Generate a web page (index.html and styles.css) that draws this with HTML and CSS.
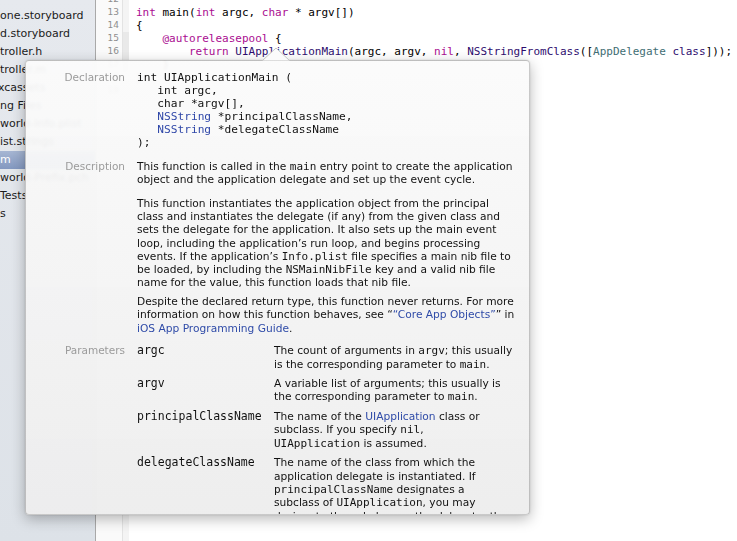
FILE: index.html
```html
<!DOCTYPE html>
<html>
<head>
<meta charset="utf-8">
<link rel="stylesheet" href="styles.css">
</head>
<body>
<div class="window">
  <nav class="sidebar">
    <ul class="files">
      <li>ate.m</li>
      <li>one.storyboard</li>
      <li>d.storyboard</li>
      <li>troller.h</li>
      <li>troller.m</li>
      <li class="cut">xcassets</li>
      <li>ng Files</li>
      <li>world-Info.plist</li>
      <li>ist.strings</li>
      <li class="selected">m</li>
      <li>world-Prefix.pch</li>
      <li>Tests</li>
      <li>s</li>
    </ul>
  </nav>
  <div class="gutter">
    <div class="numbers">
      <div>12</div><div>13</div><div>14</div><div>15</div><div>16</div><div>17</div><div>18</div><div>19</div>
    </div>
  </div>
  <div class="ribbon">
    <div class="fold"></div>
  </div>
  <main class="editor">
<pre class="code"><span> </span>
<span class="kw">int</span> main(<span class="kw">int</span> argc, <span class="kw">char</span> * argv[])
{
    <span class="kw">@autoreleasepool</span> {
        <span class="kw">return</span> <span class="fn">UIApplicationMain</span>(argc, argv, <span class="kw">nil</span>, <span class="fn">NSStringFromClass</span>([<span class="cls">AppDelegate</span> <span class="fn">class</span>]));
    }
}
</pre>
  </main>
</div>

<div class="popover">
  <svg class="arrow" width="28" height="14" viewBox="0 0 28 14"><path d="M0.5 13.5 L14 1 L27.5 13.5" fill="#fbfbfb" stroke="#c4c4c4" stroke-width="1"/></svg>
  <div class="popover-body">
    <section class="qh-section">
      <div class="qh-label">Declaration</div>
<pre class="decl">int UIApplicationMain (
   int argc,
   char *argv[],
   <span class="type">NSString</span> *principalClassName,
   <span class="type">NSString</span> *delegateClassName
);</pre>
    </section>

    <section class="qh-section desc-section">
      <div class="qh-label">Description</div>
      <div class="desc">
        <p>This function is called in the <code>main</code> entry point to create the application<br>object and the application delegate and set up the event cycle.</p>
        <p class="p2">This function instantiates the application object from the principal<br>class and instantiates the delegate (if any) from the given class and<br>sets the delegate for the application. It also sets up the main event<br>loop, including the application’s run loop, and begins processing<br>events. If the application’s <code>Info.plist</code> file specifies a main nib file to<br>be loaded, by including the <code>NSMainNibFile</code> key and a valid nib file<br>name for the value, this function loads that nib file.</p>
        <p class="p3">Despite the declared return type, this function never returns. For more<br>information on how this function behaves, see “<a>“Core App Objects”</a>” in<br><a>iOS App Programming Guide</a>.</p>
      </div>
    </section>

    <section class="qh-section params-section">
      <div class="qh-label">Parameters</div>
      <dl class="params">
        <dt>argc</dt>
        <dd>The count of arguments in <code>argv</code>; this usually<br>is the corresponding parameter to <code>main</code>.</dd>
        <dt>argv</dt>
        <dd>A variable list of arguments; this usually is<br>the corresponding parameter to <code>main</code>.</dd>
        <dt>principalClassName</dt>
        <dd>The name of the <a>UIApplication</a> class or<br>subclass. If you specify <code>nil</code>,<br><code>UIApplication</code> is assumed.</dd>
        <dt>delegateClassName</dt>
        <dd>The name of the class from which the<br>application delegate is instantiated. If<br><code>principalClassName</code> designates a<br>subclass of <code>UIApplication</code>, you may<br>designate the subclass as the delegate; the</dd>
      </dl>
    </section>
  </div>
</div>
</body>
</html>
```

FILE: styles.css
```css
* { box-sizing: border-box; }
html, body { margin: 0; padding: 0; }
body {
  width: 737px;
  height: 541px;
  overflow: hidden;
  background: #fff;
  font-family: "DejaVu Sans", sans-serif;
  color: #1a1a1a;
  position: relative;
}

.window {
  display: flex;
  height: 541px;
}

/* Navigator */
.sidebar {
  width: 96px;
  flex: none;
  background: linear-gradient(#e6e9ee, #dde2e8);
  border-right: 1px solid #a9a9a9;
  overflow: hidden;
}
.files {
  list-style: none;
  margin: -13px 0 0 0;
  padding: 0;
  font-size: 11px;
}
.files li {
  height: 18px;
  line-height: 18px;
  white-space: nowrap;
  color: #1b1b1b;
}
.files li:first-child { height: 20px; line-height: 16px; }
.files li.cut { margin-left: -2px; }
.files li.selected {
  background: linear-gradient(#a6b6d3, #8398c0);
  color: #fff;
}

/* Gutter */
.gutter {
  width: 27px;
  flex: none;
  background: #fafafa;
  border-right: 1px solid #e3e3e3;
}
.numbers {
  margin-top: -7.5px;
  font-size: 9px;
  line-height: 13px;
  color: #8e8e8e;
  text-align: right;
  padding-right: 3px;
}
.ribbon {
  width: 6px;
  flex: none;
  background: #f4f4f4;
  padding-top: 31.5px;
}
.fold {
  height: 40px;
  background: #e9e9e9;
}

/* Editor */
.editor {
  flex: 1;
  background: #fff;
  overflow: hidden;
}
.code {
  margin: -7.5px 0 0 0;
  padding-left: 7px;
  font-family: "DejaVu Sans Mono", monospace;
  font-size: 11px;
  line-height: 13px;
  color: #000;
  white-space: pre;
}
.kw { color: #aa0d91; }
.fn { color: #2e0d6e; }
.cls { color: #3f6e74; }

/* Quick help popover */
.popover {
  position: absolute;
  left: 25px;
  top: 60px;
  width: 505px;
  height: 455px;
}
.arrow {
  position: absolute;
  left: 237px;
  top: -13px;
  z-index: 2;
  display: block;
}
.popover-body {
  height: 100%;
  overflow: hidden;
  border-radius: 4px;
  border: 1px solid rgba(0, 0, 0, 0.2);
  background: linear-gradient(rgba(251, 251, 251, 0.95), rgba(237, 237, 237, 0.96));
  box-shadow: 0 4px 14px rgba(0, 0, 0, 0.28), 0 0 2px rgba(0, 0, 0, 0.15);
  backdrop-filter: blur(1.5px);
  padding: 10px 4px 0 0;
}
.qh-section {
  display: grid;
  grid-template-columns: 99px 1fr;
  column-gap: 12px;
  align-items: start;
}
.qh-label {
  text-align: right;
  font-size: 10.5px;
  line-height: 13.3px;
  color: #9b9b9b;
}
.decl {
  margin: 0;
  font-family: "DejaVu Sans Mono", monospace;
  font-size: 11.2px;
  line-height: 13px;
  color: #111;
}
.qh-section:first-child .qh-label { line-height: 13px; }
.type { color: #2f47a8; }

.desc-section { margin-top: 11px; }
.desc {
  font-size: 10.65px;
  line-height: 13.25px;
  color: #111;
  white-space: nowrap;
}
.desc p { margin: 0; }
.desc .p2 { margin-top: 10.3px; }
.desc .p3 { margin-top: 5.6px; }

code {
  font-family: "DejaVu Sans Mono", monospace;
  font-size: 11px;
  line-height: 1;
}
a { color: #2f4ba8; text-decoration: none; }

.params-section { margin-top: 9.3px; }
.params {
  margin: 0;
  display: grid;
  grid-template-columns: 137px 1fr;
  row-gap: 6.2px;
  font-size: 10.65px;
  line-height: 13.35px;
  color: #111;
}
.params dt {
  font-family: "DejaVu Sans Mono", monospace;
  font-size: 11.5px;
}
.params dd { margin: 0; white-space: nowrap; }
```
